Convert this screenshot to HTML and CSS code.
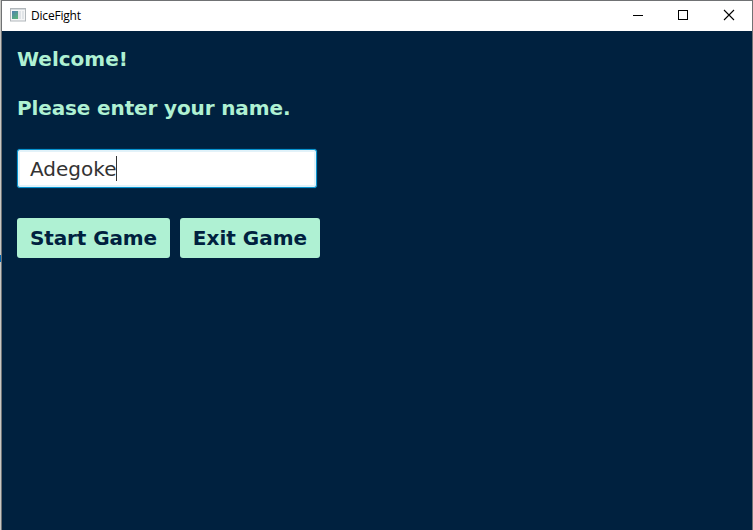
FILE: index.html
```html
<!DOCTYPE html>
<html lang="en">
<head>
<meta charset="utf-8">
<title>DiceFight</title>
<link rel="stylesheet" href="styles.css">
</head>
<body>
<div class="window">
  <header class="titlebar">
    <svg class="app-icon" width="16" height="14" viewBox="0 0 16 14">
      <defs><linearGradient id="pane" x1="0" y1="0" x2=".6" y2="1"><stop offset="0" stop-color="#4f80b0"/><stop offset="1" stop-color="#58b07c"/></linearGradient></defs>
      <rect x=".5" y=".5" width="15" height="12.5" fill="#f5f6f7" stroke="#b1b7bb"/>
      <path d="M1 1.5h14" stroke="#d5dadd"/>
      <rect x="2" y="3" width="6" height="8" fill="url(#pane)"/>
      <rect x="8" y="3" width="3" height="8" fill="#dfe3e7"/>
      <rect x="12" y="3" width="2" height="8" fill="#e1e5e8"/>
    </svg>
    <span class="title">DiceFight</span>
    <div class="controls">
      <svg width="45" height="30" viewBox="0 0 45 30"><path d="M17 14.5h10" stroke="#000"/></svg>
      <svg width="45" height="30" viewBox="0 0 45 30"><rect x="17.5" y="9.5" width="9" height="9" fill="none" stroke="#000"/></svg>
      <svg width="46" height="30" viewBox="0 0 46 30"><path d="M18 9l10 10M28 9L18 19" stroke="#000" stroke-width="1.1"/></svg>
    </div>
  </header>
  <main class="content">
    <p class="label welcome">Welcome!</p>
    <p class="label prompt">Please enter your name.</p>
    <div class="field"><span class="value">Adegoke</span><span class="caret"></span></div>
    <div class="buttons">
      <button class="btn start">Start Game</button>
      <button class="btn exit">Exit Game</button>
    </div>
  </main>
</div>
</body>
</html>
```
FILE: styles.css
```css
* { box-sizing: border-box; }
body {
  margin: 0;
  height: 530px;
  overflow: hidden;
  padding-left: 1px;
  background: linear-gradient(#0067b3, #0067b3) 0 255px / 1px 7px no-repeat, #c8c8c4;
  font-family: Verdana, "DejaVu Sans", sans-serif;
}
.window {
  height: 530px;
  border: 1px solid #707274;
  border-bottom: 0;
  background: #00213f;
}
.titlebar {
  display: flex;
  align-items: center;
  height: 30px;
  padding-left: 8px;
  background: #fff;
}
.app-icon { display: block; margin-top: -2px; }
.title {
  margin-left: 5px;
  font: 12px/16px "Open Sans", "Noto Sans", sans-serif;
  letter-spacing: -0.2px;
  color: #000;
}
.controls { display: flex; margin-left: auto; }
.controls svg { display: block; }
.content { padding: 16px 15px; }
.label {
  margin: 0 0 25px;
  font-size: 20px;
  font-weight: bold;
  line-height: 24px;
  color: #aff1d3;
  white-space: nowrap;
}
.prompt { margin-bottom: 29px; letter-spacing: -0.13px; }
.field {
  display: flex;
  align-items: center;
  width: 300px;
  height: 39px;
  padding-left: 12px;
  border: 1px solid #0793cf;
  border-radius: 3px;
  background: #fff;
  box-shadow: inset 0 0 0 2px #e2f2f9, 0 0 1px 0 #0793cf;
  font-size: 20px;
  line-height: 24px;
  color: #333;
}
.caret { width: 1px; height: 25px; background: #333; }
.buttons { display: flex; gap: 10px; margin-top: 30px; }
.btn {
  height: 40px;
  padding: 0;
  border: 0;
  border-radius: 3px;
  background: #aff1d3;
  font: bold 20px/24px Verdana, "DejaVu Sans", sans-serif;
  color: #00213f;
  white-space: nowrap;
}
.start { width: 153px; letter-spacing: -0.1px; }
.exit { width: 140px; }
```
